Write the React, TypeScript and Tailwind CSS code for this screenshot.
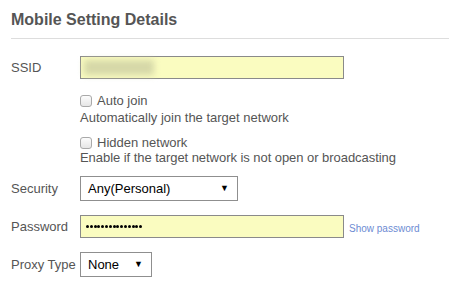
const blur = 'filter blur-[3px]';

function Checkbox() {
  return <span className="inline-block w-[12px] h-[12px] rounded-[3px] border border-[#a9a9a9] bg-gradient-to-b from-[#fcfcfc] to-[#e6e6e6]" />;
}

function Select({ value, width }: { value: string; width: string }) {
  return (
    <div className={`${width} h-[25px] border border-[#8f8f8f] bg-white flex items-center justify-between pl-[7px] pr-[8px] text-[13px] text-black`}>
      <span>{value}</span>
      <span className="text-[9px] leading-none">▼</span>
    </div>
  );
}

export default function App() {
  const dots = Array.from({ length: 15 });
  return (
    <div className="w-[449px] h-[286px] bg-white text-[#555] text-[13px] font-['Liberation_Sans',Arial,sans-serif] overflow-hidden">
      <div className="pl-[11px]">
        <h2 className="pt-[8px] h-[38px] text-[16px] font-bold text-[#555]">Mobile Setting Details</h2>
        <div className="h-px bg-[#ddd]" />

        <div className="mt-[17px] flex items-center">
          <label className="w-[69px]">SSID</label>
          <div className="w-[264px] h-[23px] border border-[#8a8a8a] bg-[#fafcc0] flex items-center pl-[3px]">
            <div className={`w-[70px] h-[15px] bg-[#d6d8a8] ${blur}`} />
          </div>
        </div>

        <div className="ml-[69px] mt-[14px]">
          <div className="flex items-center gap-[5px] h-[16px]">
            <Checkbox />
            <span className="text-[#555]">Auto join</span>
          </div>
          <p className="mt-[1px] leading-[16px]">Automatically join the target network</p>
          <div className="flex items-center gap-[5px] h-[16px] mt-[9px]">
            <Checkbox />
            <span>Hidden network</span>
          </div>
          <p className="mt-[-1px] leading-[16px] tracking-[-0.05px]">Enable if the target network is not open or broadcasting</p>
        </div>

        <div className="mt-[10px] flex items-center">
          <label className="w-[69px]">Security</label>
          <Select value="Any(Personal)" width="w-[158px]" />
        </div>

        <div className="mt-[14px] flex items-center">
          <label className="w-[69px]">Password</label>
          <div className="w-[264px] h-[23px] border border-[#8a8a8a] bg-[#fafcc0] flex items-center pl-[5px] gap-[0.8px]">
            {dots.map((_, i) => (
              <span key={i} className="w-[3px] h-[3px] rounded-full bg-black" />
            ))}
          </div>
          <a className="ml-[5px] mt-[3px] text-[10px] text-[#6d8bd3]">Show password</a>
        </div>

        <div className="mt-[14px] flex items-center">
          <label className="w-[69px] whitespace-nowrap">Proxy Type</label>
          <Select value="None" width="w-[72px]" />
        </div>
      </div>
    </div>
  );
}
